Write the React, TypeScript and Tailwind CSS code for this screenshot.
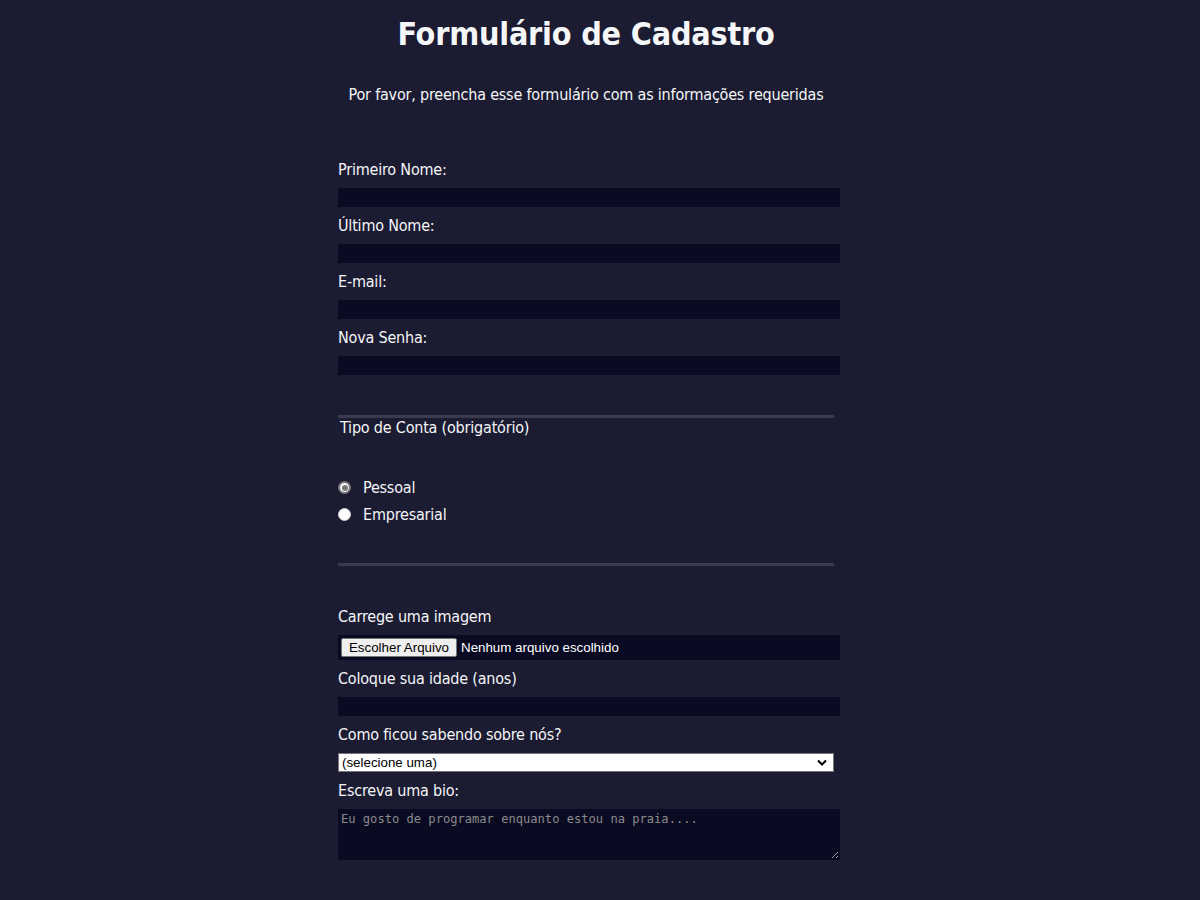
import React from 'react';

const labelCls = 'block h-[19px] text-[16px] leading-[19px]';
const inputCls = 'block h-[19px] w-[502px] border border-[#0a0a23] bg-[#0a0a23] text-[#f5f6f7] outline-none';

function Radio({ checked, label }: { checked?: boolean; label: string }) {
  return (
    <div className="flex h-[19px] items-center gap-[12px] text-[16px] leading-[19px]">
      {checked ? (
        <span className="flex h-[13px] w-[13px] items-center justify-center rounded-full border-2 border-[#7a7a7a] bg-white">
          <span className="h-[6px] w-[6px] rounded-full bg-[#7a7a7a]" />
        </span>
      ) : (
        <span className="h-[13px] w-[13px] rounded-full border border-[#cfcfcf] bg-white" />
      )}
      <span>{label}</span>
    </div>
  );
}

export default function App() {
  return (
    <div className="min-h-screen bg-[#1b1b32] font-['DejaVu_Sans_Condensed','DejaVu_Sans',sans-serif] tracking-[-0.2px] text-[#f5f6f7]">
      <div className="w-[1178px] pb-[40px]">
        <h1 className="pr-[6px] pt-[15px] text-center text-[32px] font-bold leading-[38px]">
          Formulário de Cadastro
        </h1>
        <p className="mt-[32px] pr-[6px] text-center text-[16px] leading-[19px]">
          Por favor, preencha esse formulário com as informações requeridas
        </p>

        <form className="mx-auto mt-[56px] w-[502px]">
          {/* dados pessoais */}
          <div className="flex w-[496px] flex-col gap-[9px] border-b-[3px] border-[#3b3b4f] pb-[40px]">
            <label className={labelCls}>Primeiro Nome:</label>
            <input className={inputCls} type="text" />
            <label className={labelCls}>Último Nome:</label>
            <input className={inputCls} type="text" />
            <label className={labelCls}>E-mail:</label>
            <input className={inputCls} type="email" />
            <label className={labelCls}>Nova Senha:</label>
            <input className={inputCls} type="password" />
          </div>

          {/* tipo de conta */}
          <div className="w-[496px] border-b-[3px] border-[#3b3b4f] pb-[39px]">
            <div className="h-[19px] pl-[2px] text-[16px] leading-[19px]">Tipo de Conta (obrigatório)</div>
            <div className="mt-[41px] flex flex-col gap-[8px]">
              <Radio checked label="Pessoal" />
              <Radio label="Empresarial" />
            </div>
          </div>

          {/* extras */}
          <div className="mt-[41px] flex flex-col gap-[9px]">
            <label className={labelCls}>Carrege uma imagem</label>
            <div className="flex h-[25px] w-[502px] items-center bg-[#0a0a23] font-['Liberation_Sans',Arial,sans-serif] text-[13.33px] tracking-normal">
              <span className="ml-[3px] flex h-[19px] w-[116px] items-center justify-center rounded-[2px] border border-[#767676] bg-[#efefef] text-black">
                Escolher Arquivo
              </span>
              <span className="ml-[4px] text-white">Nenhum arquivo escolhido</span>
            </div>
            <label className={labelCls}>Coloque sua idade (anos)</label>
            <input className={inputCls} type="number" />
            <label className={labelCls}>Como ficou sabendo sobre nós?</label>
            <div className="flex h-[19px] w-[496px] items-center justify-between border border-[#767676] bg-white pl-[3px] pr-[6px] font-['Liberation_Sans',Arial,sans-serif] text-[13.33px] tracking-normal text-black">
              <span>(selecione uma)</span>
              <svg width="10" height="7" viewBox="0 0 10 7" fill="none">
                <path d="M1 1.5 L5 5.5 L9 1.5" stroke="#000" strokeWidth="2" />
              </svg>
            </div>
            <label className={labelCls}>Escreva uma bio:</label>
            <textarea
              className="block h-[51px] w-[502px] border border-[#0a0a23] bg-[#0a0a23] p-[2px] font-['DejaVu_Sans_Mono',monospace] text-[12.1px] leading-[14px] tracking-normal text-[#f5f6f7] outline-none placeholder:text-[#8a8a8a]"
              placeholder="Eu gosto de programar enquanto estou na praia...."
            />
          </div>
        </form>
      </div>
    </div>
  );
}
